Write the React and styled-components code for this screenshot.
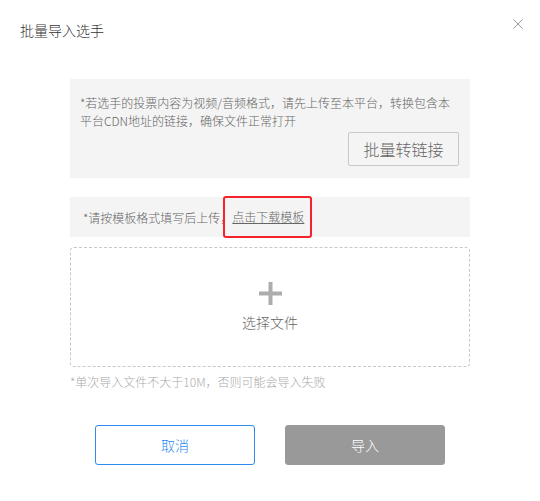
import styled, { createGlobalStyle } from "styled-components";

const Global = createGlobalStyle`
  body {
    margin: 0;
    background: #fff;
    font-family: "Noto Sans CJK SC", "Noto Sans", sans-serif;
    font-weight: 300;
  }
  button {
    font-weight: 300;
  }
`;

const Dialog = styled.div`
  width: 540px;
  height: 501px;
  box-sizing: border-box;
  display: flex;
  flex-direction: column;
  background: #fff;
`;

const Header = styled.div`
  display: flex;
  justify-content: space-between;
  align-items: flex-start;
  padding: 19px 17px 0 20px;
`;

const Title = styled.div`
  font-size: 14px;
  line-height: 20px;
  margin-top: 1px;
  color: #333;
`;

const Close = styled.button`
  width: 10px;
  height: 10px;
  padding: 0;
  border: 0;
  background: none;
  cursor: pointer;
  display: flex;
`;

const Body = styled.div`
  display: flex;
  flex-direction: column;
  padding: 0 70px;
  margin-top: 39px;
`;

const Notice = styled.div`
  background: #f4f4f4;
  padding: 15px 11px 12px 10px;
  display: flex;
  flex-direction: column;
  align-items: flex-end;
`;

const NoticeText = styled.p`
  margin: 0;
  align-self: stretch;
  font-size: 12px;
  line-height: 18px;
  color: #666;
`;

const GhostButton = styled.button`
  margin-top: 2px;
  width: 111px;
  height: 34px;
  box-sizing: border-box;
  border: 1px solid #c8c8c8;
  border-radius: 2px;
  background: #f4f4f4;
  color: #666;
  font-family: inherit;
  font-size: 16px;
  cursor: pointer;
`;

const TemplateRow = styled.div`
  margin-top: 19px;
  height: 40px;
  background: #f4f4f4;
  display: flex;
  align-items: center;
  padding-left: 13px;
  font-size: 12px;
  color: #666;
`;

const LinkWrap = styled.span`
  position: relative;
  display: inline-block;
  line-height: 18px;
`;

const Link = styled.a`
  color: #666;
  text-decoration: underline;
  cursor: pointer;
`;

const Highlight = styled.span`
  position: absolute;
  left: -9px;
  top: -12px;
  width: 89px;
  height: 42px;
  box-sizing: border-box;
  border: 2px solid #f5222d;
  border-radius: 3px;
  pointer-events: none;
`;

const Drop = styled.div`
  margin-top: 10px;
  height: 120px;
  box-sizing: border-box;
  border: 1px dashed #c8c8c8;
  border-radius: 4px;
  display: flex;
  flex-direction: column;
  align-items: center;
  justify-content: center;
  gap: 7px;
  cursor: pointer;
`;

const DropLabel = styled.span`
  font-size: 14px;
  line-height: 20px;
  color: #666;
`;

const Hint = styled.p`
  margin: 6px 0 0;
  font-size: 12px;
  line-height: 18px;
  color: #aaa;
`;

const Footer = styled.div`
  margin-top: 34px;
  display: flex;
  justify-content: center;
  gap: 30px;
`;

const Button = styled.button`
  width: 160px;
  height: 40px;
  box-sizing: border-box;
  border-radius: 3px;
  font-family: inherit;
  font-size: 14px;
  cursor: pointer;
  border: 1px solid ${(p) => (p.$primary ? "#999" : "#2d8cf0")};
  background: ${(p) => (p.$primary ? "#999" : "#fff")};
  color: ${(p) => (p.$primary ? "#fff" : "#2d8cf0")};
`;

function Plus() {
  return (
    <svg width="23" height="23" viewBox="0 0 23 23">
      <rect x="0" y="9.5" width="23" height="4" fill="#adadad" />
      <rect x="9.5" y="0" width="4" height="23" fill="#adadad" />
    </svg>
  );
}

export default function App() {
  return (
    <>
      <Global />
      <Dialog>
        <Header>
          <Title>批量导入选手</Title>
          <Close aria-label="关闭">
            <svg width="10" height="10" viewBox="0 0 10 10">
              <path d="M0.5 0.5L9.5 9.5M9.5 0.5L0.5 9.5" stroke="#999" strokeWidth="1" />
            </svg>
          </Close>
        </Header>
        <Body>
          <Notice>
            <NoticeText>
              *若选手的投票内容为视频/音频格式，请先上传至本平台，转换包含本平台CDN地址的链接，确保文件正常打开
            </NoticeText>
            <GhostButton>批量转链接</GhostButton>
          </Notice>
          <TemplateRow>
            *请按模板格式填写后上传，
            <LinkWrap>
              <Link>点击下载模板</Link>
              <Highlight />
            </LinkWrap>
          </TemplateRow>
          <Drop>
            <Plus />
            <DropLabel>选择文件</DropLabel>
          </Drop>
          <Hint>*单次导入文件不大于10M，否则可能会导入失败</Hint>
          <Footer>
            <Button>取消</Button>
            <Button $primary>导入</Button>
          </Footer>
        </Body>
      </Dialog>
    </>
  );
}
